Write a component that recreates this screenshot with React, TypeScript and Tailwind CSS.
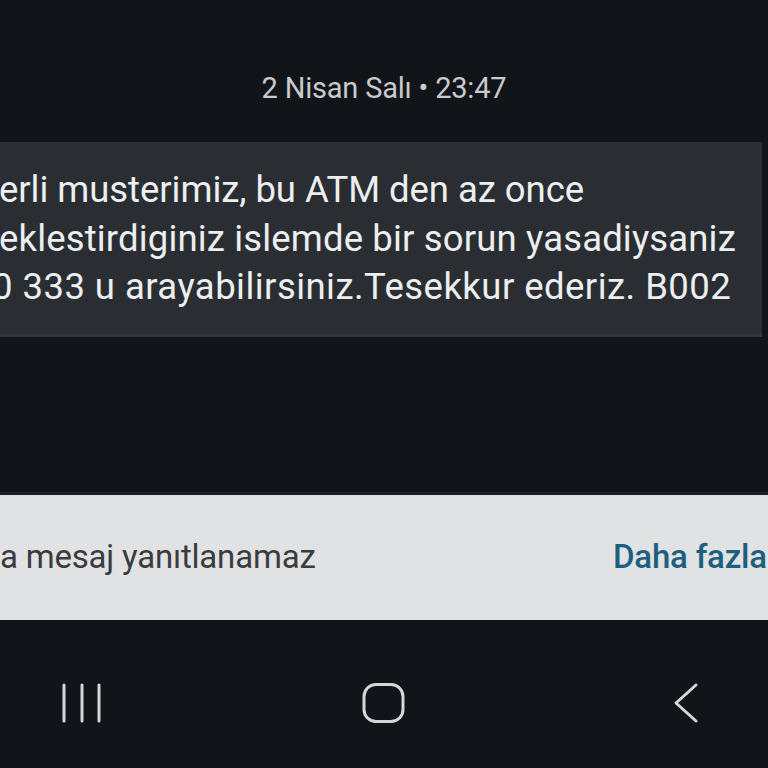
export default function App() {
  return (
    <div className="w-[768px] h-[768px] overflow-hidden bg-[#111519] flex flex-col font-['Roboto',sans-serif]">
      <div className="h-[142px] flex items-start justify-center pt-[68px]">
        <span className="text-[29px] leading-[40px] text-[#c9cacc] tracking-[-0.2px]">2 Nisan Salı • 23:47</span>
      </div>

      <div className="h-[195px] w-[762px] bg-[#2a2e32] border-b-[3px] border-[#33373b] overflow-hidden pt-[24px] text-[36.5px] leading-[48.5px] text-[#eceef0] whitespace-nowrap">
        <div className="ml-[-1px] tracking-[-0.05px]">erli musterimiz, bu ATM den az once</div>
        <div className="ml-[-1px] tracking-[0.15px]">eklestirdiginiz islemde bir sorun yasadiysaniz</div>
        <div className="ml-[-8px] tracking-[0.45px]">0 333 u arayabilirsiniz.Tesekkur ederiz. B002</div>
      </div>

      <div className="h-[158px] border-b-[3px] border-[#1d2125]" />

      <div className="h-[125px] bg-[#e1e2e4] flex items-center whitespace-nowrap overflow-hidden">
        <span className="text-[33px] text-[#3b3c3e] tracking-[-0.2px] mt-[-2px]">a mesaj yanıtlanamaz</span>
        <span className="text-[33px] text-[#1d5f7e] font-medium tracking-[-0.2px] ml-auto mr-[-60px] w-[215px] mt-[-2px]">Daha fazla</span>
      </div>

      <div className="flex-1 pt-[62px]">
        <div className="w-[768px] relative h-[42px]">
          <svg className="absolute left-[60px] top-[0px]" width="44" height="42" viewBox="0 0 44 42">
            <g stroke="#d6d7d9" strokeWidth="3" strokeLinecap="round">
              <line x1="4" y1="3" x2="4" y2="39" />
              <line x1="22" y1="3" x2="22" y2="39" />
              <line x1="39" y1="3" x2="39" y2="39" />
            </g>
          </svg>
          <svg className="absolute left-[361px] top-[0px]" width="46" height="42" viewBox="0 0 46 42">
            <rect x="3" y="2.5" width="39" height="37" rx="12" fill="none" stroke="#d6d7d9" strokeWidth="3" />
          </svg>
          <svg className="absolute left-[670px] top-[0px]" width="32" height="42" viewBox="0 0 32 42">
            <polyline points="26,3 6,21 26,39" fill="none" stroke="#d6d7d9" strokeWidth="3" strokeLinecap="round" strokeLinejoin="round" />
          </svg>
        </div>
      </div>
    </div>
  );
}
